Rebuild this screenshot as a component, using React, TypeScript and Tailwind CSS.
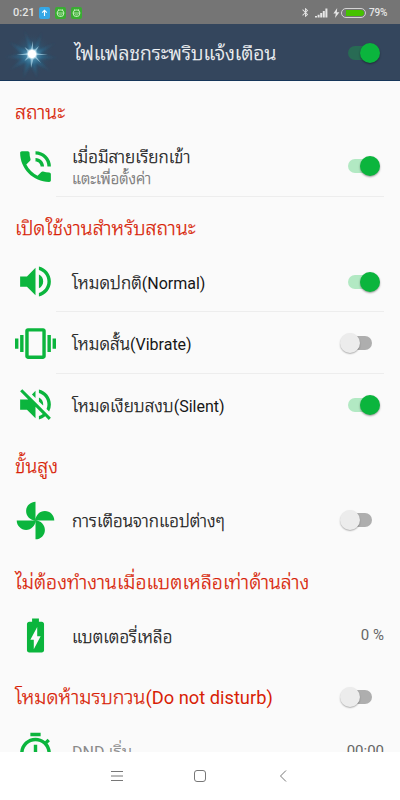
import type { ElementType } from 'react'
import {
  MdBatteryChargingFull,
  MdBluetooth,
  MdPhoneInTalk,
  MdVibration,
  MdVolumeOff,
  MdVolumeUp,
} from 'react-icons/md'
import clsx from 'clsx'

type Row = {
  label:  string
  icon:   ElementType
  sub?:   string
  on?:    boolean
  value?: string
  muted?: boolean
}

type Section = {
  title: string
  on?:   boolean
  rows:  Row[]
}

function Pinwheel({ className }: { className?: string }) {
  return (
    <svg viewBox="0 0 24 24" fill="currentColor" className={className}>
      <path d="M12 12c0-3 2.46-5.5 5.5-5.5S23 9 23 12H12zm0 0c0 3-2.46 5.5-5.5 5.5S1 15 1 12h11zm0 0c-3 0-5.5-2.46-5.5-5.5S9 1 12 1v11zm0 0c3 0 5.5 2.46 5.5 5.5S15 23 12 23V12z" />
    </svg>
  )
}

function Stopwatch({ className }: { className?: string }) {
  return (
    <svg viewBox="0 0 24 24" fill="currentColor" className={className}>
      <path d="M15 1H9v2h6V1zm-4 13h2V8h-2v6zm8.03-6.61l1.42-1.42c-.43-.51-.9-.99-1.41-1.41l-1.42 1.42C16.07 4.74 14.12 4 12 4c-4.97 0-9 4.03-9 9s4.02 9 9 9 9-4.03 9-9c0-2.12-.74-4.07-1.97-5.61zM12 20c-3.87 0-7-3.13-7-7s3.13-7 7-7 7 3.13 7 7-3.13 7-7 7z" />
    </svg>
  )
}

const SECTIONS: Section[] = [
  {
    title: 'สถานะ',
    rows: [
      { label: 'เมื่อมีสายเรียกเข้า', sub: 'แตะเพื่อตั้งค่า', icon: MdPhoneInTalk, on: true },
    ],
  },
  {
    title: 'เปิดใช้งานสำหรับสถานะ',
    rows: [
      { label: 'โหมดปกติ(Normal)',     icon: MdVolumeUp,  on: true  },
      { label: 'โหมดสั้น(Vibrate)',      icon: MdVibration, on: false },
      { label: 'โหมดเงียบสงบ(Silent)', icon: MdVolumeOff, on: true  },
    ],
  },
  {
    title: 'ขั้นสูง',
    rows: [{ label: 'การเตือนจากแอปต่างๆ', icon: Pinwheel, on: false }],
  },
  {
    title: 'ไม่ต้องทำงานเมื่อแบตเหลือเท่าด้านล่าง',
    rows: [{ label: 'แบตเตอรี่เหลือ', icon: MdBatteryChargingFull, value: '0 %' }],
  },
  {
    title: 'โหมดห้ามรบกวน(Do not disturb)',
    on: false,
    rows: [{ label: 'DND เริ่ม', icon: Stopwatch, value: '00:00', muted: true }],
  },
]

// Thai runs get a slightly larger, lighter looped face than the Latin ones
function MixedText({ text }: { text: string }) {
  return text.split(/([\u0e00-\u0e7f]+)/).filter(Boolean).map((part, i) =>
    /[\u0e00-\u0e7f]/.test(part) ? (
      <span
        key={i}
        className="font-['Noto_Sans_Thai_Looped','Noto_Sans_Thai',sans-serif] text-[1.07em] font-light [-webkit-text-stroke:0.25px_currentColor]"
      >
        {part}
      </span>
    ) : (
      part
    ),
  )
}

function Switch({ on, dark }: { on: boolean; dark?: boolean }) {
  return (
    <span
      role="switch"
      aria-checked={on}
      className={clsx(
        'relative mr-3 h-[14px] w-6 shrink-0',
        on ? 'rounded-l-full' : 'rounded-r-full',
        on ? (dark ? 'bg-[#286b54]' : 'bg-[#b2e9c3]') : 'bg-[#aeaeae]',
      )}
    >
      <span
        className={clsx(
          'absolute -top-[3px] size-5 rounded-full',
          on
            ? 'left-3 bg-[#0bb53d] shadow-[0_1px_2px_rgba(0,0,0,0.4)]'
            : '-left-2 bg-[#ececec] shadow-[0_1px_1.5px_rgba(0,0,0,0.3)]',
        )}
      />
    </span>
  )
}

function StatusBar() {
  return (
    <div className="flex h-6 shrink-0 items-center bg-[#757575] px-[13px] pt-px text-[#e6e6e6]">
      <span className="w-[26px] text-[11px] font-medium leading-none">0:21</span>
      <div className="flex gap-[5px]">
        <svg viewBox="0 0 11 12" className="h-3 w-[11px]">
          <rect width="11" height="12" rx="2" fill="#35a7e6" />
          <path d="M5.5 9V3.4M3.2 5.6l2.3-2.3 2.3 2.3" fill="none" stroke="#fff" strokeWidth="1.1" />
        </svg>
        {[0, 1].map(i => (
          <svg key={i} viewBox="0 0 11 12" className="h-3 w-[11px]">
            <rect width="11" height="12" rx="2" fill="#39ad32" />
            <rect x="2.4" y="3" width="6.2" height="6.4" rx="2.4" fill="none" stroke="#c5efbd" />
            <path d="M1.6 6h7.8M3.8 7.2c.8 1 2.6 1 3.4 0M3.2 2.2l.8 1M7.8 2.2l-.8 1" fill="none" stroke="#c5efbd" strokeWidth=".8" />
          </svg>
        ))}
      </div>
      <div className="ml-auto flex items-center">
        <MdBluetooth className="size-[11px]" />
        <svg viewBox="0 0 13 10" className="ml-1 h-[10px] w-[13px]" fill="currentColor">
          <path d="M0 8h2v1.5H0zM2.6 6.7h2v2.8h-2zM5.2 5h2v4.5h-2zM7.8 3h2v6.5h-2zM10.4.5h2v9h-2z" />
        </svg>
        <svg viewBox="0 0 7 10" className="ml-[5px] h-[10px] w-[7px]" fill="currentColor">
          <path d="M4.2 0 .4 5.6h2.4L2 10l4.4-5.8H3.8z" />
        </svg>
        <div className="ml-px flex h-[10px] w-[25px] items-center justify-end rounded-full border border-[#d4d4d4] p-px">
          <div className="h-[6px] w-[18px] rounded-r-full bg-[#46c200]" />
        </div>
        <span className="ml-[3px] w-[18px] whitespace-nowrap text-[10px] font-medium leading-none tracking-[-0.2px]">79%</span>
      </div>
    </div>
  )
}

function Flare() {
  return (
    <svg viewBox="0 0 64 56" className="h-14 w-16 shrink-0">
      <defs>
        <radialGradient id="glow">
          <stop offset="0" stopColor="#4d9cc2" stopOpacity=".8" />
          <stop offset=".35" stopColor="#2a678a" stopOpacity=".6" />
          <stop offset="1" stopColor="#34465d" stopOpacity="0" />
        </radialGradient>
        <radialGradient id="core">
          <stop offset="0" stopColor="#fff" />
          <stop offset=".6" stopColor="#fff" />
          <stop offset="1" stopColor="#b9e2f2" stopOpacity="0" />
        </radialGradient>
        <radialGradient id="ray" gradientUnits="userSpaceOnUse" cx="32" cy="29" r="28">
          <stop offset="0" stopColor="#6fb9d8" />
          <stop offset=".4" stopColor="#2a6c91" stopOpacity=".6" />
          <stop offset="1" stopColor="#2a6488" stopOpacity="0" />
        </radialGradient>
        <filter id="soft">
          <feGaussianBlur stdDeviation="1" />
        </filter>
      </defs>
      <circle cx="32" cy="29" r="21" fill="url(#glow)" />
      <path
        fill="url(#ray)"
        filter="url(#soft)"
        d="M30 27 24 4l10 22L42 6l-5 20 20-9-18 12 20 4-21 1 13 13-15-9 1 16-6-16-8 17 3-18-18 9 14-12-20-2 20-3L8 16z"
      />
      <path
        fill="#b5dff0"
        fillOpacity=".65"
        d="m33 16 0 10 6-5-4 7 13 2-13 0 6 8-7-6-3 11-0.500-11-6 4 4-6-12 0 12-2-4-6 6 4z"
      />
      <circle cx="32" cy="29" r="6" fill="url(#core)" />
    </svg>
  )
}

function SettingRow({ row, divided }: { row: Row; divided: boolean }) {
  const { label, sub, icon: Icon, on, value, muted } = row
  return (
    <div className="flex h-[61.5px] shrink-0 items-stretch">
      <div className="flex w-[41px] items-center">
        <Icon className="size-[41px] text-[#0bb53d]" />
      </div>
      <div
        className={clsx(
          'flex flex-1 items-center border-b pl-4 pt-px',
          divided ? 'border-[#ededed]' : 'border-transparent',
        )}
      >
        <div className={clsx('flex-1 whitespace-nowrap', sub ? 'pt-px' : 'pt-0.5')}>
          <div className={clsx('text-[16px]', sub ? 'leading-5' : 'leading-6', muted ? 'text-[#8a8a8a]' : 'text-[#161616]')}>
            <MixedText text={label} />
          </div>
          {sub && (
            <div className="text-[14px] leading-[18px] text-[#757575]">
              <MixedText text={sub} />
            </div>
          )}
        </div>
        {value !== undefined && <span className="text-[15px] text-[#666]">{value}</span>}
        {on !== undefined && <Switch on={on} />}
      </div>
    </div>
  )
}

export default function App() {
  return (
    <div className="flex h-[800px] w-[400px] flex-col overflow-hidden bg-[#fafafa] font-['Roboto','Noto_Sans',sans-serif]">
      <StatusBar />

      <header className="flex h-[57.3px] shrink-0 items-center border-b border-[#16365a] bg-[#34465d] pr-4 pt-px">
        <Flare />
        <h1 className="ml-[10px] flex-1 whitespace-nowrap text-[18.4px] leading-8 text-[#f4f6f8]">
          <MixedText text="ไฟแฟลชกระพริบแจ้งเตือน" />
        </h1>
        <Switch on dark />
      </header>

      <main className="flex min-h-0 flex-1 flex-col overflow-hidden pl-[15px] pr-4">
        {SECTIONS.map(section => (
          <section key={section.title} className="flex shrink-0 flex-col">
            <div className="flex h-[54px] items-center justify-between pt-[8px]">
              <h2 className="whitespace-nowrap text-[18.3px] leading-7 text-[#d81e06]">
                <MixedText text={section.title} />
              </h2>
              {section.on !== undefined && <Switch on={section.on} />}
            </div>
            {section.rows.map((row, i) => (
              <SettingRow
                key={row.label}
                row={row}
                divided={i < section.rows.length - 1 || !!row.sub}
              />
            ))}
          </section>
        ))}
      </main>

      {/* System navigation */}
      <nav className="flex h-12 shrink-0 items-center justify-center gap-[71px] bg-white text-[#777]">
        <svg viewBox="0 0 12 12" className="size-3" fill="none" stroke="currentColor">
          <path d="M0 1.500h12M0 6h12M0 10.500h12" />
        </svg>
        <svg viewBox="0 0 12 12" className="size-3" fill="none" stroke="currentColor">
          <rect x=".5" y=".5" width="11" height="11" rx="2.500" />
        </svg>
        <svg viewBox="0 0 12 12" className="size-3" fill="none" stroke="currentColor">
          <path d="M9 .5 3.500 6 9 11.500" />
        </svg>
      </nav>
    </div>
  )
}
